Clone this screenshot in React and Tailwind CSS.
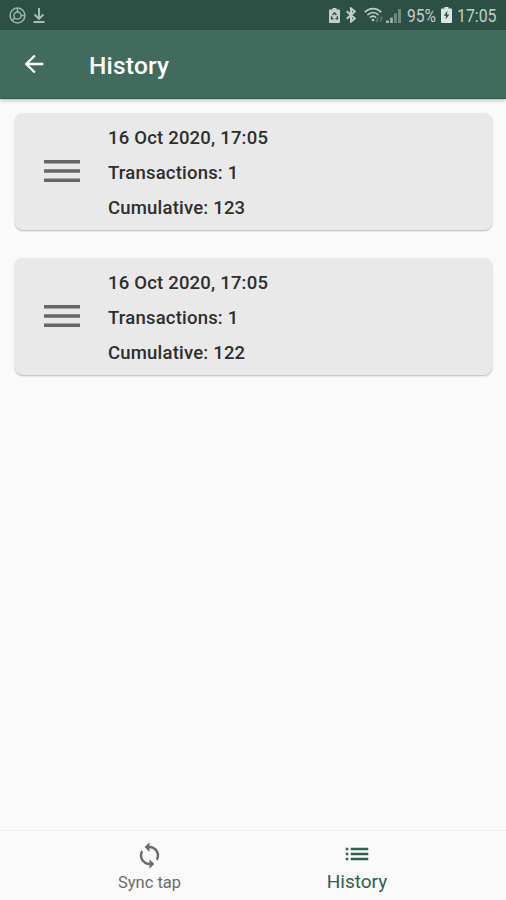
import { MdArrowBack, MdList, MdSync } from 'react-icons/md';

const entries = [
  { id: 1, date: '16 Oct 2020, 17:05', transactions: 1, cumulative: 123 },
  { id: 2, date: '16 Oct 2020, 17:05', transactions: 1, cumulative: 122 },
];

const StatusBar = () => (
  <div className="flex h-[30px] items-center justify-between bg-[#2d5045] pl-[9px] pr-[9px] text-[#c3cfcb]">
    <div className="flex items-center gap-[7px] text-[#9db3ab]">
      <svg
        className="h-[17px] w-[17px]"
        viewBox="0 0 17 17"
        fill="none"
        stroke="currentColor"
        strokeWidth="1.5"
        aria-hidden="true"
      >
        <circle cx="8.5" cy="8.5" r="7.4" />
        <circle cx="8.5" cy="8.5" r="3.6" />
        <path d="M8.5 1v4M12 8.5h4M3.2 13.5l2.7-2.4" />
      </svg>
      <svg
        className="h-[17px] w-[12px] text-[#a9bbb4]"
        viewBox="0 0 12 17"
        fill="none"
        stroke="currentColor"
        strokeWidth="2"
        aria-hidden="true"
      >
        <path d="M6 1v11M1.5 7.5L6 11.8l4.5-4.3M.5 15h11" />
      </svg>
    </div>

    <div className="flex items-center">
      <svg
        className="mr-[6px] h-[15px] w-[11px]"
        viewBox="0 0 11 15"
        aria-hidden="true"
      >
        <path
          fill="currentColor"
          d="M3.5 0h4v1.5H10a1 1 0 011 1V14a1 1 0 01-1 1H1a1 1 0 01-1-1V2.5a1 1 0 011-1h2.5z"
        />
        <path
          fill="none"
          stroke="#2d5045"
          strokeWidth="1.4"
          d="M3.6 7l1.9-2.2L7.4 7M2.6 8.3v2.5h1.9M8.4 8.3v2.5H6.5"
        />
      </svg>
      <svg
        className="mr-[8px] h-[16px] w-[10px]"
        viewBox="0 0 10 16"
        fill="none"
        stroke="currentColor"
        strokeWidth="2"
        aria-hidden="true"
      >
        <path d="M.8 4.2l8 7.2L5 14.6V1.4l3.8 3.2-8 7.2" />
      </svg>
      <svg
        className="mr-[2px] h-[17px] w-[20px]"
        viewBox="0 0 20 17"
        fill="none"
        stroke="currentColor"
        strokeWidth="1.7"
        aria-hidden="true"
      >
        <path d="M.8 5.2C5.6.4 12.6.4 17.2 5.2M3.4 8c3.4-3.3 7.8-3.3 11.2 0M6 10.7c1.8-1.8 4.2-1.8 6 0" />
        <circle cx="9" cy="13" r="1.3" fill="currentColor" stroke="none" />
        <path
          className="text-[#5f7c72]"
          strokeWidth="1.3"
          d="M13.5 10v5m-1.7-1.8l1.7 1.8M17 15v-5l1.6 1.8"
        />
      </svg>
      <svg
        className="mr-[6px] h-[15px] w-[15px]"
        viewBox="0 0 15 15"
        fill="currentColor"
        aria-hidden="true"
      >
        <path
          className="text-[#a3b5ae]"
          d="M0 12.5h3V15H0zM4.2 9.5h2.6V15H4.2z"
        />
        <path className="text-[#70897f]" d="M8 5.5h2.8V15H8zM12 1h3v14h-3z" />
      </svg>
      <span className="block w-[34px] pt-[2px]">
        <span className="inline-block origin-left scale-x-[0.87] text-[18px] leading-[28px]">
          95%
        </span>
      </span>
      <svg
        className="mr-[5px] h-[16px] w-[11px]"
        viewBox="0 0 11 16"
        aria-hidden="true"
      >
        <path
          fill="#dde4e1"
          d="M3.5 0h4v1.5H10a1 1 0 011 1V15a1 1 0 01-1 1H1a1 1 0 01-1-1V2.5a1 1 0 011-1h2.5z"
        />
        <path fill="#2d5045" d="M6.4 3.4L2.8 8.8h2.3l-.5 3.8L8.3 7.4H5.9z" />
      </svg>
      <span className="block w-[40px] pt-[2px]">
        <span className="inline-block origin-left scale-x-[0.88] text-[18px] leading-[28px]">
          17:05
        </span>
      </span>
    </div>
  </div>
);

const HistoryCard = ({ entry }) => (
  <li className="flex h-[117px] items-center rounded-[8px] bg-[#e9e9e9] pl-[29px] shadow-[0_1px_2px_rgba(0,0,0,0.28)]">
    <svg
      className="mb-[2px] mr-[28px] h-[22px] w-[36px] text-[#666]"
      viewBox="0 0 36 22"
      fill="currentColor"
      aria-hidden="true"
    >
      <path d="M0 0h36v3.6H0zM0 9.2h36v3.6H0zM0 18.4h36V22H0z" />
    </svg>
    <div className="mt-[3px] text-[18.5px] font-medium leading-[35px] tracking-[0.2px] text-[#2e2e2e]">
      <p>{entry.date}</p>
      <p>Transactions: {entry.transactions}</p>
      <p>Cumulative: {entry.cumulative}</p>
    </div>
  </li>
);

const App = () => {
  return (
    <div className="flex h-screen flex-col overflow-hidden bg-[#fafafa] font-['Roboto',sans-serif]">
      <StatusBar />

      <header className="z-10 flex h-[69px] items-center border-b border-[#2f5a4c] bg-[#406b5d] pl-[20px] text-white shadow-[0_1px_4px_rgba(0,0,0,0.3)]">
        <button type="button" aria-label="Back">
          <MdArrowBack className="h-[28px] w-[28px]" />
        </button>
        <h1 className="ml-[41px] mt-[4px] text-[24.5px] font-medium leading-[26px] tracking-[0.2px]">
          History
        </h1>
      </header>

      <main className="flex-1 pl-[15px] pr-[14px] pt-[14px]">
        <ul className="space-y-[28px]">
          {entries.map((entry) => (
            <HistoryCard key={entry.id} entry={entry} />
          ))}
        </ul>
      </main>

      <nav className="flex h-[70px] justify-center border-t border-[#f1f1f1] bg-[#fafafa]">
        <button
          type="button"
          className="flex w-[207px] flex-col items-center pt-[10px] text-[#6b6b6b]"
        >
          <MdSync className="h-[29px] w-[29px]" />
          <span className="mt-[3px] text-[16.5px] leading-[20px]">
            Sync tap
          </span>
        </button>
        <button
          type="button"
          className="flex w-[207px] flex-col items-center pl-px pt-[8px] text-[#2f6050]"
        >
          <MdList className="h-[30px] w-[30px]" />
          <span className="mt-[1px] text-[19px] leading-[24px]">History</span>
        </button>
      </nav>
    </div>
  );
};

export default App;
